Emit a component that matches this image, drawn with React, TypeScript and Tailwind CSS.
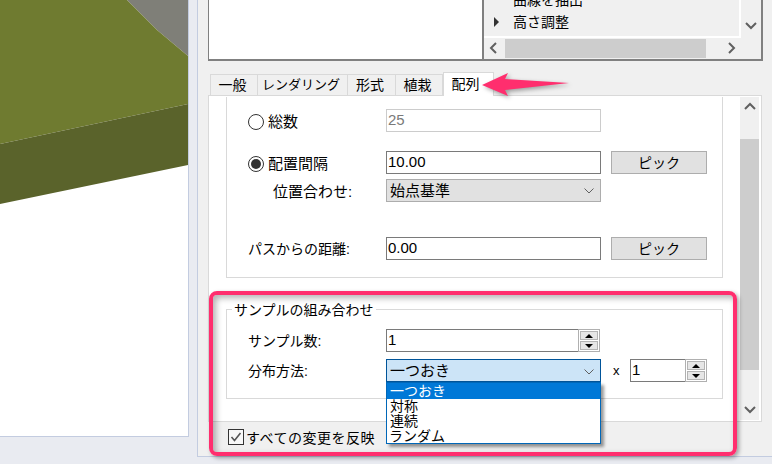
function Chevron({ dir, className = "" }: { dir: "up" | "down" | "left" | "right"; className?: string }) {
  const points = {
    up: "1,8 6,3 11,8",
    down: "1,4 6,9 11,4",
    left: "8,1 3,6 8,11",
    right: "4,1 9,6 4,11",
  }[dir];
  return (
    <svg width="12" height="12" viewBox="0 0 12 12" className={className}>
      <polyline points={points} fill="none" stroke="#606060" strokeWidth="2" />
    </svg>
  );
}

function ComboArrow() {
  return (
    <svg width="10" height="6" viewBox="0 0 10 6">
      <polyline points="0.5,0.5 5,5 9.5,0.5" fill="none" stroke="#606060" strokeWidth="1" />
    </svg>
  );
}

function Spinner() {
  return (
    <div className="flex h-[23px] w-[22px] flex-col justify-center gap-px border border-[#b0b0b0] bg-white px-px">
      <div className="flex h-[9px] items-center justify-center border border-[#b4b4b4] bg-[#e6e6e6]">
        <div className="h-0 w-0 border-x-[4px] border-b-[4px] border-x-transparent border-b-black" />
      </div>
      <div className="flex h-[9px] items-center justify-center border border-[#b4b4b4] bg-[#e6e6e6]">
        <div className="h-0 w-0 border-x-[4px] border-t-[4px] border-x-transparent border-t-black" />
      </div>
    </div>
  );
}

function Radio({ checked }: { checked?: boolean }) {
  return (
    <div className="flex h-[16px] w-[16px] items-center justify-center rounded-full border border-[#333333] bg-white">
      {checked && <div className="h-[10px] w-[10px] rounded-full bg-[#333333]" />}
    </div>
  );
}

function TextInput({ value, className = "" }: { value: string; className?: string }) {
  return (
    <div className={`flex h-[23px] items-center border border-[#7a7a7a] bg-white pl-[1px] text-[15px] ${className}`}>
      {value}
    </div>
  );
}

function PickButton() {
  return (
    <div className="ml-[10px] flex h-[23px] w-[96px] items-center justify-center border border-[#adadad] bg-[#e1e1e1] pt-[1px] text-[14px]">
      ピック
    </div>
  );
}

function Tab({ label, className }: { label: string; className: string }) {
  return (
    <div className={`flex h-[21px] items-center justify-center border-t border-r border-[#d9d9d9] pr-[3px] whitespace-nowrap ${className}`}>
      {label}
    </div>
  );
}

function Scene() {
  return (
    <svg width="188" height="436" viewBox="0 0 188 436" className="block">
      <rect width="188" height="436" fill="#ffffff" />
      <polygon points="127,0 188,0 188,56 157,30" fill="#7f7f78" />
      <polygon points="0,0 127,0 157,30 188,56 188,104 0,144" fill="#6f7b30" />
      <polygon points="0,144 188,104 188,165 0,204" fill="#5a632b" />
    </svg>
  );
}

export default function App() {
  return (
    <div className="relative flex h-[464px] w-[772px] items-start overflow-hidden bg-[#e9ebf1] font-['Liberation_Sans','Noto_Sans_CJK_JP',sans-serif] text-black">
      <div className="h-[437px] w-[189px] border-r border-b border-[#c3cce0]">
        <Scene />
      </div>

      <div className="ml-[8px] h-[457px] w-[575px] border-b border-l border-[#c3cce0] bg-[#f0f0f0] pl-[10px]">
        {/* top boxes, cut by the window edge */}
        <div className="flex h-[61px] w-[555px]">
          <div className="h-full w-[274px] border-r-0 border-b-2 border-l border-[#808080] bg-white" />
          <div className="flex h-full w-[281px] flex-col border-r-2 border-b-2 border-l-2 border-[#808080] bg-[#f0f0f0]">
            <div className="flex h-[38px] overflow-hidden">
              <div className="flex w-[257px] flex-col justify-end border-r-2 border-b-2 border-white pb-[3px] pl-[29px] text-[14px] leading-[22px]">
                <div>曲線を抽出</div>
                <div className="relative">
                  <div className="absolute top-[6px] -left-[19px] h-0 w-0 border-y-[5px] border-l-[5px] border-y-transparent border-l-[#333333]" />
                  高さ調整
                </div>
              </div>
              <div className="flex flex-1 items-end justify-center pb-[7px]">
                <Chevron dir="down" />
              </div>
            </div>
            <div className="flex h-[20px] items-center">
              <div className="flex w-[21px] justify-center">
                <Chevron dir="left" />
              </div>
              <div className="h-[19px] w-[203px] bg-[#cdcdcd]" />
              <div className="flex w-[55px] justify-center pr-[6px]">
                <Chevron dir="right" />
              </div>
            </div>
          </div>
        </div>

        {/* tabs */}
        <div className="mt-[11px] flex h-[23px] w-[553px] items-end pl-[2px]">
          <div className="flex border-l border-[#d9d9d9] text-[14px]">
            <Tab label="一般" className="w-[47px]" />
            <Tab label="レンダリング" className="w-[90px] text-[13px]" />
            <Tab label="形式" className="w-[48px]" />
            <Tab label="植栽" className="w-[47px]" />
          </div>
          <div className="z-10 -mb-px flex h-[24px] w-[51px] items-center justify-center border-x border-t border-[#d9d9d9] bg-white pr-[6px] text-[14px]">
            配列
          </div>
        </div>

        {/* tab page */}
        <div className="flex h-[327px] w-[554px] border border-[#d9d9d9] bg-white">
          <div className="w-[531px] pt-[1px] pl-[17px]">
            <div className="h-[181px] w-[497px] border-x border-b border-[#d9d9d9] pt-[12px] pl-[21px] text-[15px]">
              <div className="flex h-[23px] items-center">
                <div className="flex w-[138px] items-center gap-[4px] pt-[3px]">
                  <Radio />
                  総数
                </div>
                <TextInput value="25" className="w-[215px] !border-[#cccccc] text-[#7a7a7a]" />
              </div>
              <div className="mt-[19px] flex h-[23px] items-center">
                <div className="flex w-[138px] items-center gap-[4px] pt-[3px]">
                  <Radio checked />
                  配置間隔
                </div>
                <TextInput value="10.00" className="w-[215px]" />
                <PickButton />
              </div>
              <div className="mt-[5px] flex h-[23px] items-center">
                <div className="w-[138px] pt-[3px] pl-[25px]">位置合わせ:</div>
                <div className="flex h-[23px] w-[215px] items-center justify-between border border-[#adadad] bg-[#e1e1e1] pt-[1px] pr-[6px] pl-[3px]">
                  始点基準
                  <ComboArrow />
                </div>
              </div>
              <div className="mt-[35px] flex h-[23px] items-center">
                <div className="w-[138px] pt-[2px] text-[14px]">パスからの距離:</div>
                <TextInput value="0.00" className="w-[215px]" />
                <PickButton />
              </div>
            </div>

            <fieldset className="mt-[21px] h-[100px] w-[497px] border border-[#d9d9d9] pl-[21px] text-[15px]">
              <legend className="-ml-[16px] px-[2px] pt-[1px] text-[14px] leading-[20px]">サンプルの組み合わせ</legend>
              <div className="mt-[9px] flex h-[23px] items-center">
                <div className="w-[138px] pt-[2px] text-[14px]">サンプル数:</div>
                <TextInput value="1" className="w-[192px] border-r-0" />
                <Spinner />
              </div>
              <div className="mt-[7px] flex h-[23px] items-center">
                <div className="w-[138px] pt-[2px] text-[14px]">分布方法:</div>
                <div className="relative flex h-[23px] w-[215px] items-center justify-between border border-[#005499] bg-[#cce4f7] pt-[2px] pr-[6px] pl-[3px]">
                  一つおき
                  <ComboArrow />
                  <div className="absolute top-[22px] -left-px z-10 h-[62px] w-[215px] border border-[#0067b8] bg-white text-[14px] leading-[15px] shadow-[3px_3px_3px_rgba(0,0,0,0.4)]">
                    <div className="h-[16px] bg-[#0078d7] pt-[1px] pl-[3px] text-white">一つおき</div>
                    <div className="h-[15px] pl-[3px]">対称</div>
                    <div className="h-[15px] pl-[3px]">連続</div>
                    <div className="h-[15px] pl-[2px]">ランダム</div>
                  </div>
                </div>
                <div className="w-[29px] pl-[12px] text-[13px]">x</div>
                <TextInput value="1" className="w-[55px] border-r-0" />
                <Spinner />
              </div>
            </fieldset>
          </div>

          <div className="mt-[1px] flex h-[323px] w-[19px] flex-col bg-[#f0f0f0]">
            <div className="flex h-[42px] justify-center pt-[4px]">
              <Chevron dir="up" />
            </div>
            <div className="h-[231px] bg-[#cdcdcd]" />
            <div className="flex flex-1 items-end justify-center pb-[5px]">
              <Chevron dir="down" />
            </div>
          </div>
        </div>

        {/* bottom bar */}
        <div className="flex h-[30px] items-center pl-[20px] text-[14px] tracking-[0.5px]">
          <div className="mr-[2px] flex h-[16px] w-[16px] items-center justify-center border border-[#333333] bg-[#f8f8f8]">
            <svg width="12" height="12" viewBox="0 0 12 12">
              <polyline points="1.5,6 4.5,9.5 10.5,2" fill="none" stroke="#555555" strokeWidth="1.6" />
            </svg>
          </div>
          <span className="pt-[2px]">すべての変更を反映</span>
        </div>
      </div>

      {/* callout frame */}
      <div className="pointer-events-none absolute top-[291px] left-[209px] h-[165px] w-[528px] rounded-[8px] border-[4px] border-[#ff2e6e] shadow-[2px_2px_4px_rgba(0,0,0,0.35),inset_3px_3px_6px_rgba(0,0,0,0.3)]" />

      {/* callout arrow */}
      <svg width="90" height="30" viewBox="0 0 90 30" className="pointer-events-none absolute top-[70px] left-[482px] z-20 drop-shadow-[2px_2px_2px_rgba(0,0,0,0.35)]">
        <polygon points="0,15 26,3 23,9 87,13 23,20 26,26" fill="#ff2e6e" />
      </svg>
    </div>
  );
}
